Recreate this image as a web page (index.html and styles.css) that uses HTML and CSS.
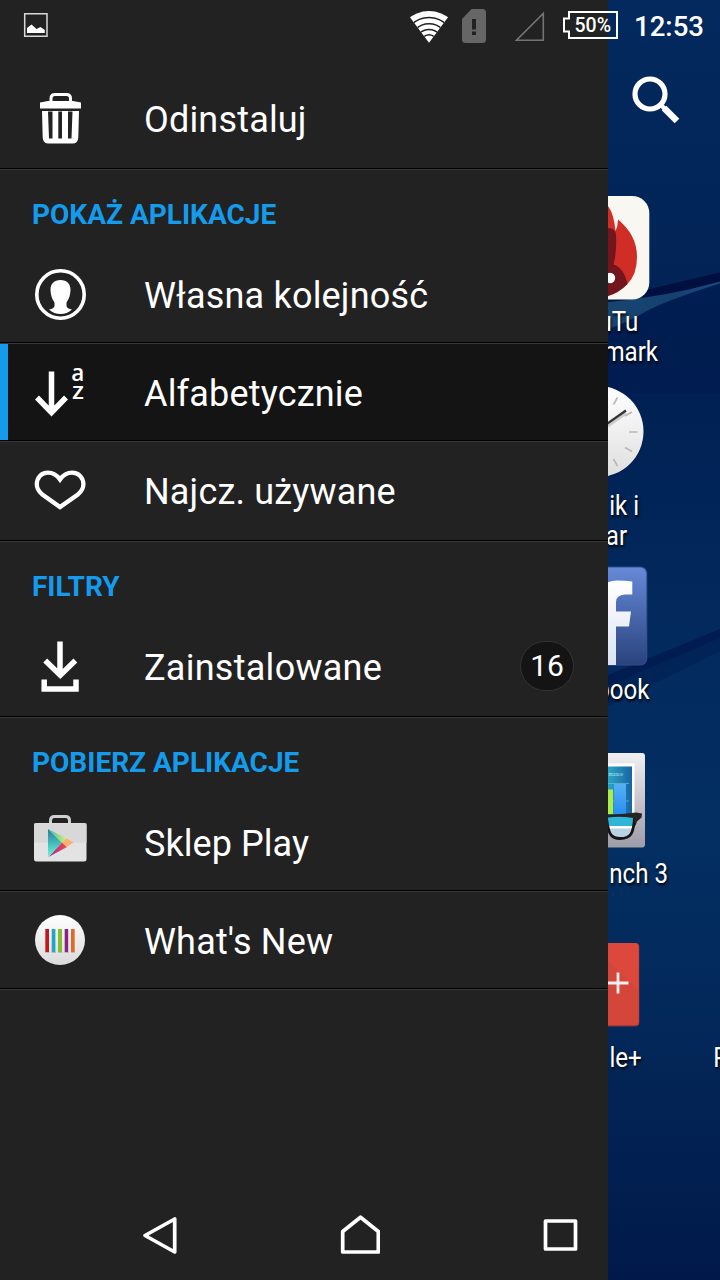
FILE: index.html
```html
<!DOCTYPE html>
<html lang="pl">
<head>
<meta charset="utf-8">
<title>Menu aplikacji</title>
<link rel="stylesheet" href="styles.css">
</head>
<body>
<div class="screen">
  <nav class="drawer">
    <section class="group">
      <div class="row">
        <svg class="icon" viewBox="28 86 64 64"><path d="M51 101.500v-3q0-4 4-4h11.500q4 0 4 4v3" fill="none" stroke="#fff" stroke-width="3"/><path fill="#fff" d="M40 102.500L48 101H73L81 102.500V108.500H40z"/><path fill="#fff" fill-rule="evenodd" d="M42 111H79L78.300 137.500Q78 143.500 72.500 143.500H48.500Q43 143.500 42.700 137.500zM48 111.500l1 27h3.500v-27zM58.300 111.500v27h3.700v-27zM68 111.500v27h3.500l1-27z"/></svg>
        <span class="label">Odinstaluj</span>
      </div>
    </section>
    <section class="group">
      <h2 class="head">POKAŻ APLIKACJE</h2>
      <div class="row">
        <svg class="icon" viewBox="28 262 64 64"><circle cx="60.500" cy="294.500" r="23.700" fill="none" stroke="#fff" stroke-width="3.600"/><path fill="#fff" d="M60.500 280C54 280 50.500 284 50.500 289.500C50.500 295 52 299 54.500 302.500V306Q54 308.500 49 309.500Q54 314 60.500 314T72 309.500Q67 308.500 66.500 306V302.500C69 299 70.500 295 70.500 289.500C70.500 284 67 280 60.500 280z"/></svg>
        <span class="label">Własna kolejność</span>
      </div>
      <div class="row selected">
        <svg class="icon" viewBox="28 360 64 64"><path d="M51.500 371.500V412M37 397.500L51.500 412.500L66 397.500" fill="none" stroke="#fff" stroke-width="5.500"/><text class="az" x="71.300" y="380.500">a</text><text class="az" x="72" y="399" textLength="12" lengthAdjust="spacingAndGlyphs">z</text></svg>
        <span class="label">Alfabetycznie</span>
      </div>
      <div class="row">
        <svg class="icon" viewBox="28 458 64 64"><path d="M60 479.500C56 474 52 472.700 48 472.700C41 472.700 36.800 478 36.800 484.500C36.800 488.500 39 491.500 42 494.200L60 507L78.200 494.200C81.200 491.500 83.400 488.500 83.400 484.500C83.400 478 79 472.700 72 472.700C68 472.700 64 474 60 479.500z" fill="none" stroke="#fff" stroke-width="4.300"/></svg>
        <span class="label">Najcz. używane</span>
      </div>
    </section>
    <section class="group">
      <h2 class="head">FILTRY</h2>
      <div class="row">
        <svg class="icon" viewBox="28 634 64 64"><path d="M60 641.500V674M45.200 660.500L60.300 675.200L75.400 660.500" fill="none" stroke="#fff" stroke-width="5.500"/><path d="M44.200 679.500V689H76V679.500" fill="none" stroke="#fff" stroke-width="5.500"/></svg>
        <span class="label wide">Zainstalowane</span>
        <span class="badge">16</span>
      </div>
    </section>
    <section class="group">
      <h2 class="head">POBIERZ APLIKACJE</h2>
      <div class="row">
        <svg class="icon" viewBox="28 810 64 64">
          <defs>
            <linearGradient id="teal" x2="0" y2="1"><stop stop-color="#2877a7"/><stop offset="1" stop-color="#61ffd0"/></linearGradient>
            <linearGradient id="green"><stop stop-color="#43b99a"/><stop offset="1" stop-color="#d9f578"/></linearGradient>
            <linearGradient id="pink"><stop stop-color="#9933a0"/><stop offset="1" stop-color="#f5434a"/></linearGradient>
          </defs>
          <path d="M50.500 824v-3.500q0-4 4-4h11q4 0 4 4v3.500" fill="none" stroke="#d0d0d0" stroke-width="3"/>
          <rect x="34" y="823" width="52.500" height="38.500" rx="2.500" fill="#e3e3e3"/><path fill="#d8d8d8" d="M34 823.500H86.500V842.500H34z"/>
          <path fill="url(#teal)" d="M48 829L62 842.500L48 857z"/><path fill="url(#green)" d="M48 829L67.500 839L62 843z"/><path fill="url(#pink)" d="M48.500 857L62 842.500L67 847z"/><path fill="#ffb070" d="M62 842.500L66.500 838.500L73.500 842.500L67 847z"/>
        </svg>
        <span class="label tight">Sklep Play</span>
      </div>
      <div class="row">
        <svg class="icon" viewBox="28 908 64 64">
          <defs><linearGradient id="disc" x2="0" y2="1"><stop stop-color="#fff"/><stop offset="1" stop-color="#dadada"/></linearGradient></defs>
          <circle cx="60" cy="940" r="25" fill="url(#disc)"/>
          <path d="M45 952.500H75" stroke="#bbb" stroke-width="1" stroke-dasharray="4.500 2"/>
          <path fill="#c5151f" d="M45.300 929h3.700v23h-3.700z"/><path fill="#20a7c8" d="M51.700 929h3.700v23h-3.700z"/><path fill="#83bf30" d="M58 929h4v23h-4z"/><path fill="#86248a" d="M64.700 929h3.500v23h-3.500z"/><path fill="#df6a27" d="M71 929h3.700v23h-3.700z"/>
        </svg>
        <span class="label">What's New</span>
      </div>
    </section>
  </nav>

  <main class="home">
    <svg class="wallpaper" viewBox="608 0 112 1280">
      <defs>
        <linearGradient id="sky" x2="0" y2="1"><stop stop-color="#03295e"/><stop offset=".2" stop-color="#022457"/><stop offset=".3" stop-color="#002053"/><stop offset=".5" stop-color="#032a5e"/><stop offset=".65" stop-color="#032f63"/><stop offset=".8" stop-color="#032859"/><stop offset="1" stop-color="#00194a"/></linearGradient>
        <linearGradient id="beam"><stop stop-color="#174570"/><stop offset=".6" stop-color="#15406e"/><stop offset="1" stop-color="#1c4a80"/></linearGradient>
      </defs>
      <rect x="608" width="112" height="1280" fill="url(#sky)"/>
      <path fill="#000f40" d="M608 301L650 289L720 272.500V283L608 312z"/>
      <path fill="url(#beam)" d="M608 302Q665 297 720 281.500V283.500Q665 301 645 312Q625 324 608 329z"/>
      <path fill="#001a4e" d="M608 329Q625 324 645 312Q665 301 720 283.500V393H608z" opacity=".6"/>
      <path fill="#00194e" d="M608 675L720 629V638L608 686z" opacity=".8"/>
      <path fill="#002052" d="M608 686L720 638V651L608 706z" opacity=".65"/>
    </svg>
    <div class="search">
      <svg viewBox="628 72 56 56"><circle cx="650" cy="94" r="15" fill="none" stroke="#fff" stroke-width="5.200"/><path d="M664 108L677 121" stroke="#fff" stroke-width="6.500"/><path d="M660 104L666 110" stroke="#fff" stroke-width="4.500"/></svg>
    </div>
    <div class="app">
      <svg viewBox="608 184 112 122"><rect x="546" y="196" width="103.300" height="103.500" rx="17" fill="#f8f7f2"/><path fill="#cf2d26" d="M608 206Q614 214 615.500 231Q618 226 618 219.500Q637 235 637 257Q637 275 627 284.500Q617 293 608 296z"/><path fill="#73151c" d="M608 228Q616 228 616 236Q617 251 613.500 264.500Q624 268 627.500 284Q619 293 608 296z"/><circle cx="610" cy="278" r="5.200" fill="#fff"/></svg>
      <div class="caption c-tu">uTu</div>
      <div class="caption c-mark">mark</div>
    </div>
    <div class="app">
      <svg viewBox="608 368 112 122"><defs><linearGradient id="face" x2="0" y2="1"><stop stop-color="#fff"/><stop offset="1" stop-color="#dfdfdf"/></linearGradient></defs><circle cx="598" cy="432" r="46" fill="#001744" opacity=".5"/><circle cx="598" cy="431.500" r="45.500" fill="url(#face)"/><path stroke="#b8b8b8" stroke-width="1.600" d="M629 432H637.500M625 416L632 412M625 447.500L632 451.500M613.500 404.500L617.500 397.500M613.500 459L617.500 466"/><path d="M608 426L626 413" stroke="#ccc" stroke-width="3"/><path d="M606 424.500L626 410.500" stroke="#333" stroke-width="2.300"/></svg>
      <div class="caption c-ik">ik i</div>
      <div class="caption c-ar">ar</div>
    </div>
    <div class="app">
      <svg viewBox="608 552 112 122"><defs><linearGradient id="fb" x2="0" y2="1"><stop stop-color="#6689d8"/><stop offset="1" stop-color="#2a437d"/></linearGradient><linearGradient id="fw" x2="0" y2="1"><stop stop-color="#fff"/><stop offset="1" stop-color="#dce2f2"/></linearGradient></defs><rect x="549" y="566.500" width="98.300" height="99" rx="7" fill="#334f91"/><rect x="549" y="567.500" width="97.300" height="97.300" rx="6" fill="url(#fb)"/><path fill="url(#fw)" d="M600 665V590Q605 580.500 617 580.500Q626 580.500 632.300 581.500V594.500H625Q616 595 616 602V611.500H631L629 626.500H616V665z"/></svg>
      <div class="caption c-book">book</div>
    </div>
    <div class="app">
      <svg viewBox="608 736 112 122"><defs><linearGradient id="gb" x2="0" y2="1"><stop stop-color="#f0f0f2"/><stop offset="1" stop-color="#9d9ca7"/></linearGradient><linearGradient id="panel"><stop stop-color="#2ba6c4"/><stop offset="1" stop-color="#1764a5"/></linearGradient><linearGradient id="bar" x2="0" y2="1"><stop stop-color="#57b0f4"/><stop offset="1" stop-color="#2189f0"/></linearGradient></defs><rect x="550" y="753" width="95" height="94.500" rx="3" fill="url(#gb)"/><path fill="#fff" d="M608 763.500H634.500V829H608z"/><path fill="url(#panel)" d="M608 766.500H632V826H608z"/><path stroke="#70bad4" stroke-width=".7" d="M608 783.500H629M608 801H629M608 817H629"/><text class="tiny" x="608.500" y="775.500">mance</text><path fill="url(#bar)" d="M614 784H626V819H614z"/><path fill="#aded4b" d="M608 789.500H613V814H608z"/><path fill="#2fb5d8" d="M608 817H633V826H608z"/><path fill="#b9d3e2" d="M608 828.500H633L629 836Q620 840 610 836z"/><path d="M606.500 818Q608 831 611 835Q614 838.500 620 838.500Q628 838.500 631 834Q634 829 634.500 817" fill="none" stroke="#151515" stroke-width="2.800"/><path fill="#252525" d="M608 814.500Q622 814.500 636 812.500L642 813.500L641.500 817.500L637 821.500L635.500 826L633.500 818Q620 816 608 817.500z"/></svg>
      <div class="caption c-nch">nch 3</div>
    </div>
    <div class="app">
      <svg viewBox="608 920 112 122"><rect x="557" y="943" width="82.300" height="83.500" rx="4" fill="#8e343b"/><rect x="557" y="943" width="81.800" height="82.300" rx="4" fill="#dc483c"/><path fill="#c94338" opacity=".4" d="M608 961L639 990V1025H608z"/><path d="M608 983H628.500M618 972.500V993.500" stroke="#f5eeee" stroke-width="2.800"/></svg>
      <div class="caption c-le">le+<span class="next">P</span></div>
    </div>
  </main>

  <header class="status">
    <svg viewBox="0 0 720 50">
      <path d="M24.700 13.700H47V36.200H24.700z" fill="none" stroke="#d8d8d8" stroke-width="1.500"/><path fill="#fff" d="M27 33V28L31.500 24.500L36.500 29L40.500 27L44.800 30V33z"/>
      <g><clipPath id="fan"><path d="M429 42.800L409 16V8H449V16z"/></clipPath><g clip-path="url(#fan)"><circle cx="429" cy="42.800" r="31.800" fill="#fff"/><g fill="none" stroke="#222" stroke-width="1.500"><circle cx="429" cy="42.800" r="25.300"/><circle cx="429" cy="42.800" r="19"/><circle cx="429" cy="42.800" r="13.300"/><circle cx="429" cy="42.800" r="8"/></g></g></g>
      <path fill="#666" d="M471.500 9H482.500Q486 9 486 12.500V39.500Q486 43 482.500 43H465.500Q462 43 462 39.500V19z"/><path fill="#222" d="M472 19h4v10.500h-4zM472 31.500h4v3.500h-4z"/>
      <path d="M543.300 13.500V40.200H516.500z" fill="none" stroke="#747474" stroke-width="1.600"/>
      <path d="M569 12H617V38H569V31.500H564V18.500H569z" fill="none" stroke="#fff" stroke-width="2"/>
      <text class="pct" x="574.500" y="32.300" textLength="36.500" lengthAdjust="spacingAndGlyphs">50%</text>
      <text class="clock" x="634" y="35.700" textLength="70" lengthAdjust="spacingAndGlyphs">12:53</text>
    </svg>
  </header>
  <footer class="keys">
    <svg viewBox="140 1210 40 50"><path d="M174.700 1219V1252L145 1235.500z"/></svg>
    <svg viewBox="340 1210 40 50"><path d="M342.700 1252V1231.500L360.500 1217.200L378.300 1231.500V1252z"/></svg>
    <svg viewBox="540 1210 40 50"><path d="M545.500 1221H575.500V1249H545.500z"/></svg>
  </footer>
</div>
</body>
</html>
```
FILE: styles.css
```css
* { box-sizing: border-box; }
body { margin: 0; background: #222; font-family: Roboto, "Noto Sans", sans-serif; color: #fff; }
svg { display: block; }

.screen { position: relative; display: grid; grid-template-columns: 608px 112px; width: 720px; height: 1280px; overflow: hidden; }

.drawer { background: #222; padding-top: 70px; }
.group { padding-bottom: 2px; border-bottom: 1px solid #000; margin-bottom: 1px; position: relative; }
.group::after { content: ""; position: absolute; left: 0; right: 0; bottom: -2px; height: 1px; background: #383838; }
.group:last-child { padding-bottom: 0; }
.head { display: flex; align-items: center; height: 76px; margin: 0; padding: 14px 0 0 32px; font-size: 28px; font-weight: 700; line-height: 32px; color: #159bec; }
.row { display: flex; align-items: center; height: 96px; padding: 0 34px 0 28px; }
.row + .row { height: 98px; border-top: 1px solid #000; box-shadow: inset 0 1px #383838; padding-top: 1px; }
.selected { background: linear-gradient(90deg, #159bec 8px, #141414 8px); }
.icon { width: 64px; height: 64px; margin-right: 52px; flex: none; }
.label { font-size: 36px; line-height: 42px; padding-top: 4px; white-space: nowrap; letter-spacing: .18px; }
.wide { letter-spacing: .27px; }
.tight { letter-spacing: .06px; }
.badge { margin-left: auto; width: 54px; height: 50px; border-radius: 25px; border: 1px solid #333; background: #141414; font-size: 30px; line-height: 48px; text-align: center; }
.az { font: 600 22.5px/1 "Open Sans", sans-serif; fill: #fff; }

.home { position: relative; display: flex; flex-direction: column; overflow: hidden; }
.wallpaper { position: absolute; inset: 0; width: 112px; height: 1280px; }
.search { position: relative; height: 184px; padding: 72px 0 0 20px; flex: none; }
.search svg { width: 56px; height: 56px; }
.app { position: relative; height: 184px; flex: none; }
.app svg { width: 112px; height: 123px; padding-bottom: 1px; }
.caption { display: flex; justify-content: flex-end; position: relative; height: 30px; font-size: 28px; line-height: 30px; white-space: nowrap; transform: scaleX(.86); transform-origin: 0 0; width: 130.2px; text-shadow: 1px 2px 3px #000; }
.c-tu { padding-right: 95px; }
.c-mark { padding-right: 72px; }
.c-ik { padding-right: 94px; }
.c-ar { padding-right: 108px; }
.c-book { padding-right: 82px; }
.c-nch { padding-right: 60.5px; }
.c-le { padding-right: 91px; }
.next { position: absolute; left: 122.500px; }
.tiny { font: 5.5px "Liberation Serif", serif; fill: #b9e2ee; }

.status { position: absolute; inset: 0 0 auto; height: 50px; }
.status svg { width: 720px; height: 50px; }
.pct { font-size: 21px; font-weight: 500; fill: #fff; }
.clock { font-size: 28px; font-weight: 500; fill: #fff; }
.keys { position: absolute; left: 0; bottom: 20px; display: flex; gap: 160px; padding-left: 140px; }
.keys svg { width: 40px; height: 50px; }
.keys path { fill: none; stroke: #fff; stroke-width: 3.7; stroke-linejoin: round; }
```
